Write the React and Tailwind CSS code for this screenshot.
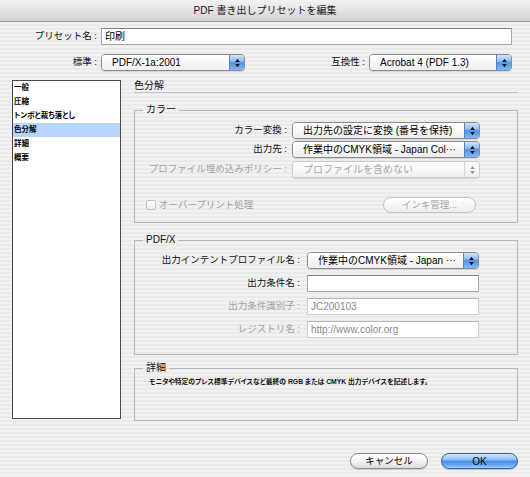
import React from "react";

function Arrows({ color }) {
  return (
    <svg width="5" height="10" viewBox="0 0 5 10">
      <path d="M2.5 0.8L4.8 4H0.2Z" fill={color} />
      <path d="M0.2 6H4.8L2.5 9.2Z" fill={color} />
    </svg>
  );
}

function Popup({ w, text, disabled }) {
  return (
    <div
      className={
        "flex h-[17px] items-stretch overflow-hidden rounded-[4px] border shadow-[0_1px_1px_rgba(0,0,0,0.12)] " +
        w +
        (disabled ? " border-[#cbcbcb]" : " border-[#8a8a8a]")
      }
    >
      <div
        className={
          "flex min-w-0 flex-1 items-center overflow-hidden whitespace-nowrap bg-gradient-to-b from-white to-[#efefef] pl-[10px] text-[10px] " +
          (disabled ? "text-[#a8a8a8]" : "text-black")
        }
      >
        {text}
      </div>
      <div
        className={
          "flex w-[15px] items-center justify-center border-l " +
          (disabled
            ? "border-[#d4d4d4] bg-gradient-to-b from-white to-[#efefef]"
            : "border-[#5b82bf] bg-[linear-gradient(180deg,#d2e6fc_0%,#8fbdf3_40%,#4f93e6_52%,#7fbaf8_100%)]")
        }
      >
        <Arrows color={disabled ? "#9a9a9a" : "#111"} />
      </div>
    </div>
  );
}

function Field({ w, text, gray }) {
  return (
    <div
      className={
        "h-[17px] overflow-hidden whitespace-nowrap border bg-white px-[3px] text-[10px] leading-[15px] " +
        w +
        (gray
          ? " border-[#cdcdcd] border-t-[#b5b5b5] text-[#8a8a8a]"
          : " border-[#a9a9a9] border-t-[#7d7d7d] text-black")
      }
    >
      {text}
    </div>
  );
}

function Label({ w, text, disabled }) {
  return (
    <div
      className={
        "shrink-0 whitespace-nowrap text-right text-[9.5px] " +
        w +
        (disabled ? " text-[#a3a3a3]" : " text-[#111]")
      }
    >
      {text}
    </div>
  );
}

const items = ["一般", "圧縮", "トンボと裁ち落とし", "色分解", "詳細", "概要"];

export default function App() {
  return (
    <div className="flex h-[477px] w-[530px] flex-col overflow-hidden bg-[#f0f0f0] font-['Liberation_Sans','Noto_Sans_CJK_JP',sans-serif]">
      {/* Title bar */}
      <div className="flex h-[22px] shrink-0 items-center justify-center rounded-t-[5px] border-b border-[#9a9a9a] bg-gradient-to-b from-[#f3f3f3] to-[#d3d3d3] text-[10px] text-[#1a1a1a]">
        PDF 書き出しプリセットを編集
      </div>

      {/* Body */}
      <div className="flex flex-1 flex-col bg-[repeating-linear-gradient(180deg,#f1f1f1_0px,#f1f1f1_2px,#eaeaea_2px,#eaeaea_4px)]">
        {/* preset name */}
        <div className="mt-[6px] flex h-[17px] items-center">
          <Label w="w-[97px]" text="プリセット名 :" />
          <div className="ml-[4px]">
            <Field w="w-[411px]" text="印刷" />
          </div>
        </div>

        {/* standard / compat */}
        <div className="mt-[9px] flex h-[17px] items-center">
          <Label w="w-[97px]" text="標準 :" />
          <div className="ml-[4px]">
            <Popup w="w-[144px]" text="PDF/X-1a:2001" />
          </div>
          <Label w="w-[120px]" text="互換性 :" />
          <div className="ml-[4px]">
            <Popup w="w-[143px]" text="Acrobat 4 (PDF 1.3)" />
          </div>
        </div>

        {/* main */}
        <div className="mt-[9px] flex pl-[12px]">
          {/* list */}
          <div className="h-[339px] w-[109px] shrink-0 border border-[#4a4a4a] bg-white">
            {items.map((t) => (
              <div
                key={t}
                className={
                  "h-[14px] whitespace-nowrap pl-[1px] text-[7.5px] font-bold leading-[14px] text-black [font-feature-settings:'palt'] " +
                  (t === "色分解" ? "bg-[#b6d5fc]" : "")
                }
              >
                {t}
              </div>
            ))}
          </div>

          {/* right pane */}
          <div className="ml-[13px] flex w-[384px] flex-col">
            <div className="h-[13px] border-b border-[#c2c2c2] pt-[1px] text-[10px] leading-[10px] text-[#111]">
              色分解
            </div>

            {/* カラー */}
            <fieldset className="mt-[11px] border border-[#b9b9b9] pb-[9px]">
              <legend className="ml-[8px] px-[3px] text-[10px] leading-[12px] text-[#111]">
                カラー
              </legend>
              <div className="flex flex-col pt-[6px]">
                <div className="flex h-[17px] items-center">
                  <Label w="w-[152px]" text="カラー変換 :" />
                  <div className="ml-[5px]">
                    <Popup w="w-[188px]" text="出力先の設定に変換 (番号を保持)" />
                  </div>
                </div>
                <div className="mt-[2px] flex h-[17px] items-center">
                  <Label w="w-[152px]" text="出力先 :" />
                  <div className="ml-[5px]">
                    <Popup w="w-[188px]" text="作業中のCMYK領域 - Japan Col···" />
                  </div>
                </div>
                <div className="mt-[3px] flex h-[17px] items-center">
                  <Label w="w-[152px]" text="プロファイル埋め込みポリシー :" disabled />
                  <div className="ml-[5px]">
                    <Popup w="w-[188px]" text="プロファイルを含めない" disabled />
                  </div>
                </div>
                <div className="mt-[19px] flex h-[16px] items-center pl-[11px]">
                  <div className="h-[10px] w-[10px] rounded-[2px] border border-[#c2c2c2] bg-gradient-to-b from-white to-[#eeeeee]" />
                  <div className="ml-[3px] text-[9.5px] text-[#a3a3a3]">オーバープリント処理</div>
                  <div className="ml-auto mr-[41px] flex h-[16px] w-[93px] items-center justify-center rounded-full border border-[#c4c4c4] bg-gradient-to-b from-white to-[#ececec] text-[9.5px] text-[#a5a5a5]">
                    インキ管理...
                  </div>
                </div>
              </div>
            </fieldset>

            {/* PDF/X */}
            <fieldset className="mt-[11px] border border-[#b9b9b9] pb-[16px]">
              <legend className="ml-[8px] px-[3px] text-[10px] leading-[12px] text-[#111]">
                PDF/X
              </legend>
              <div className="flex flex-col gap-[6px] pt-[6px]">
                <div className="flex h-[17px] items-center">
                  <Label w="w-[165px]" text="出力インテントプロファイル名 :" />
                  <div className="ml-[7px]">
                    <Popup w="w-[172px]" text="作業中のCMYK領域 - Japan ···" />
                  </div>
                </div>
                <div className="flex h-[17px] items-center">
                  <Label w="w-[165px]" text="出力条件名 :" />
                  <div className="ml-[7px]">
                    <Field w="w-[172px]" text="" />
                  </div>
                </div>
                <div className="flex h-[17px] items-center">
                  <Label w="w-[165px]" text="出力条件識別子 :" disabled />
                  <div className="ml-[7px]">
                    <Field w="w-[172px]" text="JC200103" gray />
                  </div>
                </div>
                <div className="flex h-[17px] items-center">
                  <Label w="w-[165px]" text="レジストリ名 :" disabled />
                  <div className="ml-[7px]">
                    <Field w="w-[172px]" text="http://www.color.org" gray />
                  </div>
                </div>
              </div>
            </fieldset>

            {/* 詳細 */}
            <fieldset className="mt-[7px] h-[59px] border border-[#b9b9b9]">
              <legend className="ml-[8px] px-[3px] text-[10px] leading-[12px] text-[#111]">
                詳細
              </legend>
              <div className="whitespace-nowrap pl-[14px] pt-[3px] text-[6.8px] font-bold leading-[10px] text-[#111] [font-feature-settings:'palt']">
                モニタや特定のプレス標準デバイスなど最終の RGB または CMYK 出力デバイスを記述します。
              </div>
            </fieldset>
          </div>
        </div>

        {/* buttons */}
        <div className="mt-[32px] flex justify-end gap-[13px] pr-[12px]">
          <div className="flex h-[16px] w-[78px] items-center justify-center rounded-full border border-[#8c8c8c] bg-gradient-to-b from-white via-[#f4f4f4] to-[#dcdcdc] text-[9.5px] text-black shadow-[0_1px_1px_rgba(0,0,0,0.15)]">
            キャンセル
          </div>
          <div className="flex h-[16px] w-[77px] items-center justify-center rounded-full border border-[#3e5f98] bg-[linear-gradient(180deg,#d0e6fd_0%,#8cbdf5_42%,#4a8fe6_52%,#6eb0f8_85%,#a8d6fd_100%)] text-[10px] text-black shadow-[0_1px_1px_rgba(0,0,0,0.2)]">
            OK
          </div>
        </div>
      </div>
    </div>
  );
}
